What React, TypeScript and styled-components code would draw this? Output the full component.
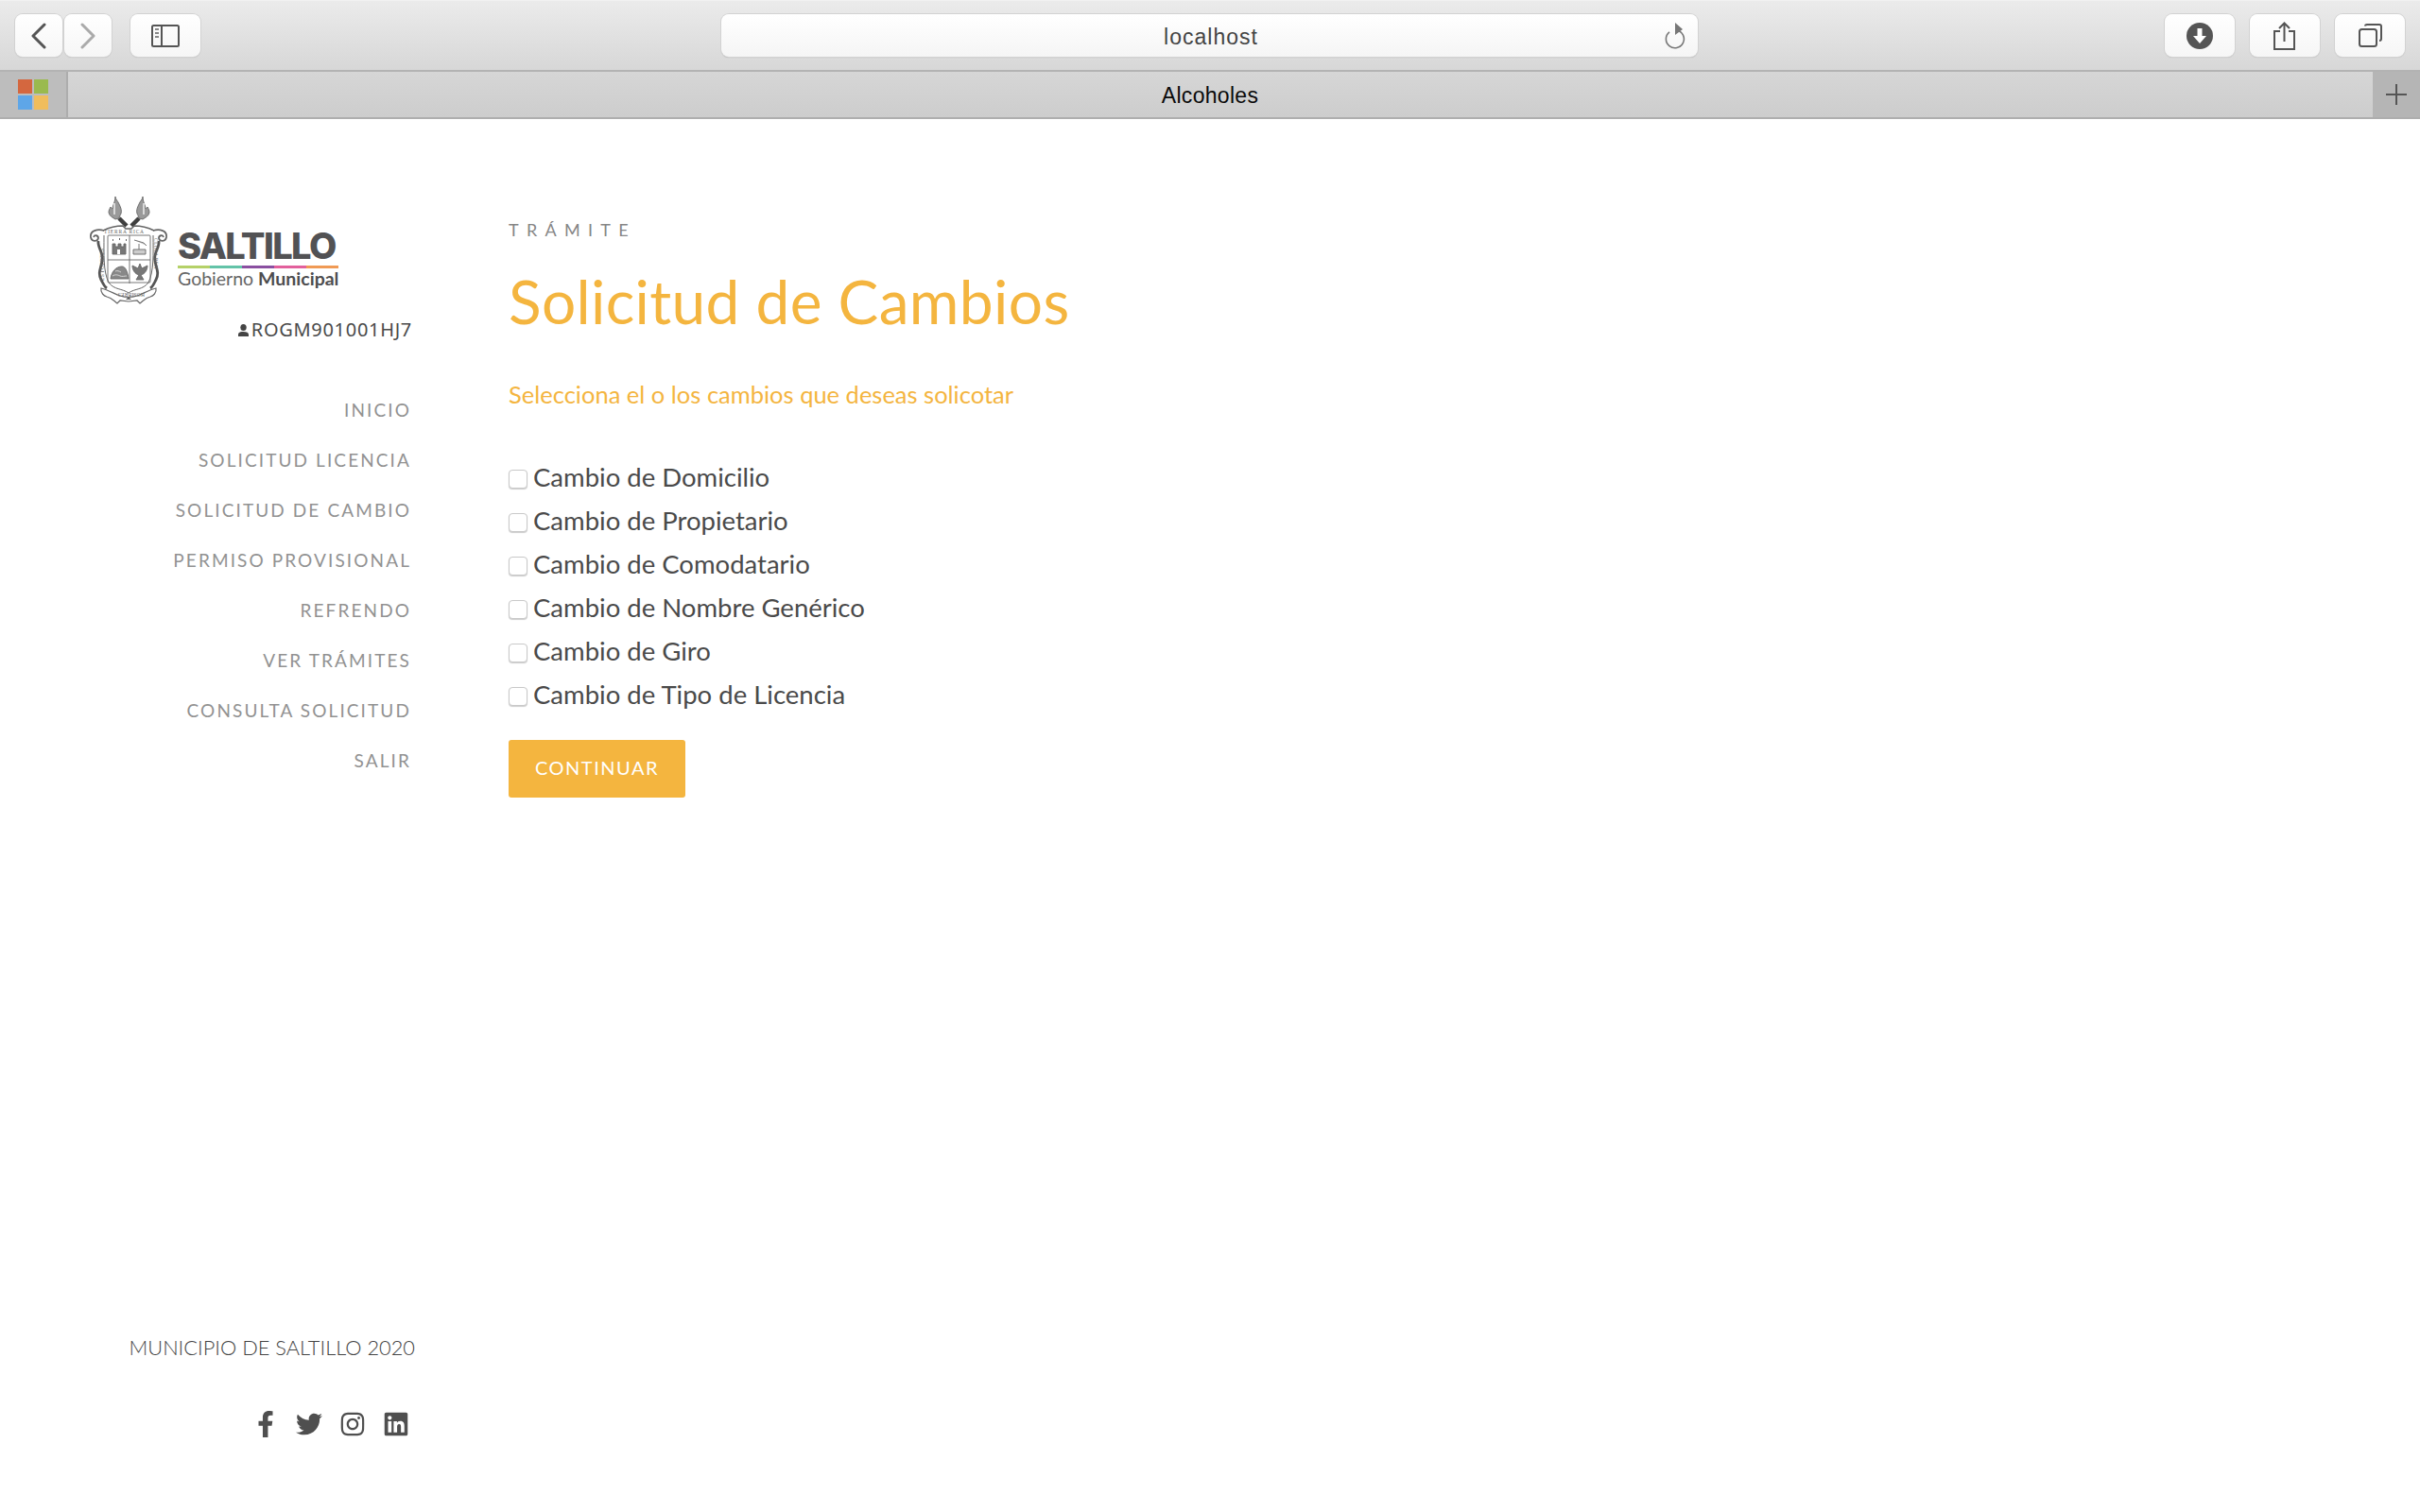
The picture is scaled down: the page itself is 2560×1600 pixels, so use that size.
import React from 'react'
import styled, { createGlobalStyle } from 'styled-components'
import { FaFacebookF, FaTwitter, FaInstagram, FaLinkedin } from 'react-icons/fa'

const GlobalStyle = createGlobalStyle`
  html, body { margin: 0; padding: 0; background: #fff; }
  body { width: 2560px; height: 1600px; overflow: hidden; font-family: 'Lato', sans-serif; }
  * { box-sizing: border-box; }
`

// browser chrome
const Toolbar = styled.div`
  height: 76px;
  padding: 14px 16px 14px;
  display: flex;
  align-items: stretch;
  background: linear-gradient(#ebebeb, #d7d7d7);
  border-top: 1px solid #f2f2f2;
  border-bottom: 2px solid #b3b3b3;
`
const ChromeBtn = styled.div<{ $w: number; $mr?: number }>`
  width: ${p => p.$w}px;
  margin-right: ${p => p.$mr ?? 0}px;
  display: flex;
  align-items: center;
  justify-content: center;
  flex: none;
  background: linear-gradient(#ffffff, #f6f6f6);
  border-radius: 8px;
  box-shadow: 0 0 0 1px #d2d2d2, 0 1px 1px #bbb;
`
const Address = styled.div`
  width: 1033px;
  margin: 0 494px 0 551px;
  padding: 4px 0 0 3px;
  flex: none;
  position: relative;
  display: flex;
  align-items: center;
  justify-content: center;
  background: linear-gradient(#ffffff, #f5f5f5);
  border-radius: 8px;
  box-shadow: 0 0 0 1px #d2d2d2, 0 1px 1px #aaa;
  font-family: 'Liberation Sans', sans-serif;
  font-size: 23px;
  letter-spacing: 1px;
  color: #444;
`
const Reload = styled.svg`
  position: absolute;
  right: 13px;
  top: 8px;
`
const TabBar = styled.div`
  height: 50px;
  display: flex;
  background: linear-gradient(#d6d6d6, #cdcdcd);
  border-bottom: 2px solid #aeaeae;
`
const FavCell = styled.div`
  width: 72px;
  display: flex;
  align-items: center;
  justify-content: center;
  background: #bdbdbd;
  border-right: 2px solid #adadad;
`
const FavGrid = styled.div`
  display: grid;
  grid-template-columns: 15px 15px;
  grid-auto-rows: 15px;
  gap: 2px;
`
const FavSquare = styled.i<{ $c: string }>`
  background: ${p => p.$c};
`
const TabTitle = styled.div`
  flex: 1;
  display: flex;
  align-items: center;
  justify-content: center;
  padding: 2px 22px 0 0;
  font-family: 'Liberation Sans', sans-serif;
  font-size: 23px;
  letter-spacing: 0.3px;
  color: #0a0a0a;
`
const PlusCell = styled.div`
  width: 50px;
  display: flex;
  align-items: center;
  justify-content: center;
  background: #b5b5b5;
`

// page
const Page = styled.div`
  height: 1474px;
  display: flex;
`
const Sidebar = styled.aside`
  width: 440px;
  flex: none;
  padding: 81px 4px 0 0;
  display: flex;
  flex-direction: column;
  align-items: flex-end;
`
const Logo = styled.div`
  align-self: flex-start;
  margin-left: 95px;
  display: flex;
  align-items: flex-start;
  gap: 11px;
`
const Wordmark = styled.div`
  margin-top: 32px;
  width: 170px;
  display: flex;
  flex-direction: column;
`
const Saltillo = styled.div`
  font-family: 'Inter', sans-serif;
  font-weight: 800;
  font-size: 38px;
  line-height: 42px;
  height: 42px;
  letter-spacing: -1.600px;
  color: #525254;
`
const Rainbow = styled.div`
  height: 3px;
  background: linear-gradient(90deg, #b5d168 0 20%, #63c3a8 20% 40%, #8a4fa0 40% 60%, #e2609c 60% 80%, #f09a55 80% 100%);
`
const Gobierno = styled.div`
  margin-top: 1px;
  font-family: 'Lato', sans-serif;
  font-size: 19.500px;
  line-height: 20px;
  color: #666;
  white-space: nowrap;
  b { font-weight: 700; color: #4d4d4f; }
`
const Rfc = styled.div`
  margin-top: 13px;
  display: flex;
  align-items: center;
  gap: 3px;
  font-family: 'Noto Sans', sans-serif;
  font-size: 20px;
  line-height: 26px;
  letter-spacing: 0.700px;
  color: #4a4a4a;
`
const Nav = styled.nav`
  margin: 60px 1px 0 0;
  display: flex;
  flex-direction: column;
  align-items: flex-end;
  gap: 29px;
`
const NavItem = styled.a`
  font-family: 'Lato', sans-serif;
  font-size: 19px;
  line-height: 24px;
  letter-spacing: 2.100px;
  color: #929292;
  white-space: nowrap;
`
const Footer = styled.div`
  margin-top: auto;
  padding-bottom: 79px;
  display: flex;
  flex-direction: column;
  align-items: flex-end;
`
const Copyright = styled.div`
  margin-right: -3px;
  font-family: 'Lato', sans-serif;
  font-weight: 300;
  font-size: 21.800px;
  line-height: 28px;
  color: #444;
  white-space: nowrap;
`
const Social = styled.div`
  margin: 53px 3px 0 0;
  display: flex;
  align-items: center;
  gap: 18px;
  color: #4f4f4f;
  font-size: 28px;
  svg { display: block; }
`
const Main = styled.main`
  padding: 106px 0 0 98px;
  flex: 1;
  display: flex;
  flex-direction: column;
  align-items: flex-start;
`
const Kicker = styled.div`
  font-family: 'Lato', sans-serif;
  font-size: 18px;
  line-height: 22px;
  letter-spacing: 8.300px;
  color: #868686;
`
const Title = styled.h1`
  margin: 26px 0 0;
  font-family: 'Lato', sans-serif;
  font-weight: 400;
  font-size: 64px;
  line-height: 78px;
  letter-spacing: 0.350px;
  color: #f4b53f;
`
const Lead = styled.p`
  margin: 44px 0 0;
  font-family: 'Lato', sans-serif;
  font-size: 25.500px;
  line-height: 30px;
  color: #f4b53f;
`
const Options = styled.div`
  margin-top: 49px;
  display: flex;
  flex-direction: column;
`
const Option = styled.label`
  height: 46px;
  display: flex;
  align-items: center;
  gap: 6px;
  font-family: 'Lato', sans-serif;
  font-size: 27.500px;
  color: #4a4a4a;
`
const Box = styled.input`
  appearance: none;
  width: 20px;
  height: 20px;
  margin: 6px 0 0;
  background: #fff;
  border: 1px solid #c9c9c9;
  border-radius: 4px;
  box-shadow: 0 1px 1px #ccc;
`
const Continue = styled.button`
  margin-top: 26px;
  width: 187px;
  height: 61px;
  padding: 0 0 4px;
  border: 0;
  border-radius: 3px;
  background: #f4b53f;
  color: #fff;
  font-family: 'Lato', sans-serif;
  font-size: 20px;
  letter-spacing: 1.500px;
`

const options = [
  'Cambio de Domicilio',
  'Cambio de Propietario',
  'Cambio de Comodatario',
  'Cambio de Nombre Genérico',
  'Cambio de Giro',
  'Cambio de Tipo de Licencia',
]
const links = ['INICIO', 'SOLICITUD LICENCIA', 'SOLICITUD DE CAMBIO', 'PERMISO PROVISIONAL', 'REFRENDO', 'VER TRÁMITES', 'CONSULTA SOLICITUD', 'SALIR']

const Crest = () => (
  <svg width="82" height="116" viewBox="0 0 82 116" fill="none" stroke="#666" strokeWidth="0.9">
    {/* torches */}
    <path d="M27 1c0 3 3 5 4 8 2 4 3 7 2 10-1 2-2 4-2 5l-4 1c-3-2-6-3-7-7 0-3 1-4 2-6 1 1 1 2 2 2 0-4 3-7 3-13z" fill="#9a9a9a" />
    <path d="M56 1c0 3-3 5-4 8-2 4-3 7-2 10 1 2 2 4 2 5l4 1c3-2 6-3 7-7 0-3-1-4-2-6-1 1-1 2-2 2 0-4-3-7-3-13z" fill="#9a9a9a" />
    <path d="M26 8v12M57 8v12" stroke="#eee" strokeWidth="1.500" />
    <path d="M31 24l8 8M52 24l-8 8" stroke="#3f3f3f" strokeWidth="4.500" />
    {/* mantle and scrolls */}
    <path d="M14 37c6-3 14-5 21-5l3 3h6l3-3c7 0 15 2 21 5" strokeWidth="1.500" />
    <path d="M15 37C8 35 0 37 1 44c1 5 7 5 8 1 0-3-4-4-5-1" strokeWidth="1.800" />
    <path d="M67 37c7-2 15 0 14 7-1 5-7 5-8 1 0-3 4-4 5-1" strokeWidth="1.800" />
    <path d="M9 48c-1 8 6 12 4 21-1 8-5 12-1 20 2 4 3 7 6 9" stroke="#555" strokeWidth="2.800" />
    <path d="M73 48c1 8-6 12-4 21 1 8 5 12 1 20-2 4-3 7-6 9" stroke="#555" strokeWidth="2.800" />
    <path d="M15 42c0 20-1 38 5 50 6 8 14 6 21 11 7-5 15-3 21-11 6-12 5-30 5-50" strokeWidth="1" />
    {/* shield */}
    <rect x="19" y="42" width="45" height="50" rx="1" />
    <path d="M42 42v51M19 68h45" />
    {/* castle */}
    <path d="M24 62v-11h3v3h3v-3h3v3h3v-3h2v11z" fill="#777" />
    <path d="M29 62v-5h3v5" fill="#fff" stroke="none" />
    <path d="M24 47h1M31 46h1M38 47h1" strokeWidth="2" />
    {/* right top charge */}
    <path d="M47 47l10 3 3 3M52 51v6M46 57h13v5H46z" fill="#ccc" />
    {/* mountain and eagle */}
    <path d="M22 88c1-8 6-13 12-13 4 0 6 6 7 13z" fill="#888" />
    <path d="M24 85c3-2 6-1 8 0s5 0 7 0M27 80c2-1 4 0 6 1" stroke="#ddd" />
    <path d="M53 72l-2 5-6-3c0 5 3 9 7 10l-3 5h8l-3-5c4-1 7-5 7-10l-6 3z" fill="#777" />
    {/* base */}
    <path d="M12 98c8 2 14 6 20 8 6 2 12 2 18 0 6-2 12-6 20-8 1 5-3 8-6 9-5 1-7 4-11 7l-3-3-9 1-9-1-3 3c-4-3-6-6-11-7-3-1-7-4-6-9z" strokeWidth="1.200" />
    <path d="M41 107l-3 3h6z" fill="#666" stroke="none" />
    <g fontFamily="'Liberation Serif', serif" fontSize="5.500" fill="#666" stroke="none">
      <text x="15" y="40" letterSpacing="0.8">TIERRA RICA</text>
      <text transform="translate(15 90) rotate(-90)" letterSpacing="0.3">ES FUERTES</text>
      <text transform="translate(68 45) rotate(90)" letterSpacing="0.3">CLIMA BEN</text>
      <text transform="translate(58 103) rotate(180)" letterSpacing="0.3">HOMBRES</text>
    </g>
  </svg>
)

export default function App() {
  return (
    <>
      <GlobalStyle />
      <Toolbar>
        <ChromeBtn $w={50} $mr={2}>
          <svg width="18" height="28" viewBox="0 0 18 28" fill="none" stroke="#555" strokeWidth="3" strokeLinecap="round" strokeLinejoin="round"><path d="M15 2L3 14l12 12" /></svg>
        </ChromeBtn>
        <ChromeBtn $w={50} $mr={20}>
          <svg width="18" height="28" viewBox="0 0 18 28" fill="none" stroke="#aaa" strokeWidth="3" strokeLinecap="round" strokeLinejoin="round"><path d="M3 2l12 12L3 26" /></svg>
        </ChromeBtn>
        <ChromeBtn $w={74}>
          <svg width="30" height="24" viewBox="0 0 30 24" fill="none" stroke="#555" strokeWidth="2"><rect x="1" y="1" width="28" height="22" rx="1.500" /><path d="M11 1v22" /><path d="M4 5h4M4 9h4M4 13h4" stroke="#888" /></svg>
        </ChromeBtn>
        <Address>
          localhost
          <Reload width="22" height="30" viewBox="0 0 22 30" fill="none" stroke="#777" strokeWidth="1.600">
            <path d="M13 9a9.500 9.500 0 1 1-8 1.800" />
            <path d="M11 1l8 7-8 6z" fill="#777" stroke="none" />
          </Reload>
        </Address>
        <ChromeBtn $w={74} $mr={16}>
          <svg width="28" height="28" viewBox="0 0 28 28"><circle cx="14" cy="14" r="14" fill="#555" /><path d="M11.500 6h5v8H21l-7 8-7-8h4.500z" fill="#fff" /></svg>
        </ChromeBtn>
        <ChromeBtn $w={74} $mr={16}>
          <svg width="24" height="30" viewBox="0 0 24 30" fill="none" stroke="#555" strokeWidth="2"><path d="M7 10H1v19h21V10h-6" /><path d="M11.500 21V2M6 7l5.500-5.500L17 7" /></svg>
        </ChromeBtn>
        <ChromeBtn $w={74}>
          <svg width="25" height="25" viewBox="0 0 25 25" fill="none" stroke="#555" strokeWidth="2"><rect x="1" y="6" width="18" height="18" rx="2.500" /><path d="M7 2.500C7 1.500 7.500 1 9 1h13c1.500 0 2 .5 2 2v13c0 1.500-.5 2-2 2" /></svg>
        </ChromeBtn>
      </Toolbar>
      <TabBar>
        <FavCell>
          <FavGrid>
            <FavSquare $c="#d4673f" />
            <FavSquare $c="#9aba4e" />
            <FavSquare $c="#5ea6e8" />
            <FavSquare $c="#f0bd5c" />
          </FavGrid>
        </FavCell>
        <TabTitle>Alcoholes</TabTitle>
        <PlusCell>
          <svg width="22" height="22" viewBox="0 0 22 22" stroke="#555" strokeWidth="2"><path d="M11 0v22M0 11h22" /></svg>
        </PlusCell>
      </TabBar>
      <Page>
        <Sidebar>
          <Logo>
            <Crest />
            <Wordmark>
              <Saltillo>SALTILLO</Saltillo>
              <Rainbow />
              <Gobierno>Gobierno <b>Municipal</b></Gobierno>
            </Wordmark>
          </Logo>
          <Rfc>
            <svg width="11" height="13" viewBox="0 0 11 13" fill="#444"><ellipse cx="5.500" cy="3.500" rx="3.200" ry="3.500" /><path d="M0 13v-2c0-2 2-3 5.500-3S11 9 11 11v2z" /></svg>
            ROGM901001HJ7
          </Rfc>
          <Nav>
            {links.map(l => <NavItem key={l}>{l}</NavItem>)}
          </Nav>
          <Footer>
            <Copyright>MUNICIPIO DE SALTILLO 2020</Copyright>
            <Social>
              <FaFacebookF />
              <FaTwitter />
              <FaInstagram />
              <FaLinkedin />
            </Social>
          </Footer>
        </Sidebar>
        <Main>
          <Kicker>TRÁMITE</Kicker>
          <Title>Solicitud de Cambios</Title>
          <Lead>Selecciona el o los cambios que deseas solicotar</Lead>
          <Options>
            {options.map(o => (
              <Option key={o}><Box type="checkbox" />{o}</Option>
            ))}
          </Options>
          <Continue type="button">CONTINUAR</Continue>
        </Main>
      </Page>
    </>
  )
}
